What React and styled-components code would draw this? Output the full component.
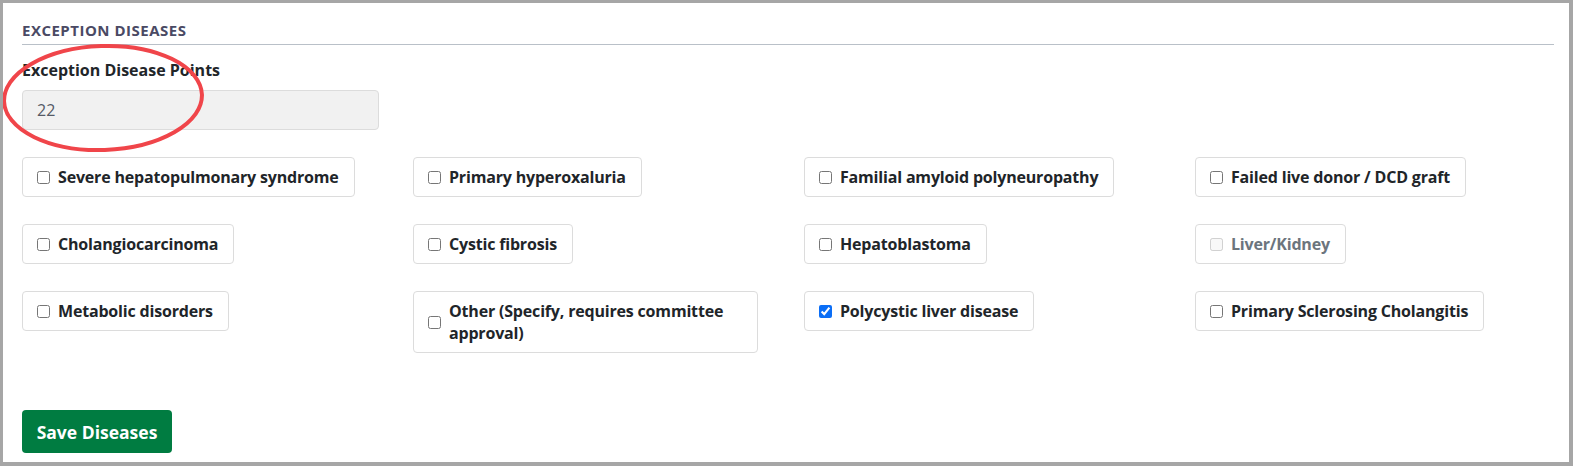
import React from 'react';
import styled, { createGlobalStyle } from 'styled-components';

const GlobalStyle = createGlobalStyle`
  html, body {
    margin: 0;
    padding: 0;
    background: #fff;
  }
  body {
    font-family: "Open Sans", "Noto Sans", "Liberation Sans", sans-serif;
    color: #212529;
  }
  * { box-sizing: border-box; }
`;

const diseases = [
  { label: 'Severe hepatopulmonary syndrome' },
  { label: 'Primary hyperoxaluria' },
  { label: 'Familial amyloid polyneuropathy' },
  { label: 'Failed live donor / DCD graft' },
  { label: 'Cholangiocarcinoma' },
  { label: 'Cystic fibrosis' },
  { label: 'Hepatoblastoma' },
  { label: 'Liver/Kidney', disabled: true },
  { label: 'Metabolic disorders' },
  { label: 'Other (Specify, requires committee approval)' },
  { label: 'Polycystic liver disease', checked: true },
  { label: 'Primary Sclerosing Cholangitis' },
];

function App() {
  return (
    <>
      <GlobalStyle />
      <Frame>
        <Section>
          <Heading>Exception Diseases</Heading>
          <Field>
            <Label htmlFor="points">Exception Disease Points</Label>
            <PointsInput id="points" value="22" disabled readOnly />
            {/* hand-drawn highlight around the points field */}
            <Circle width="220" height="170" aria-hidden="true">
              <ellipse
                cx="103"
                cy="98"
                rx="99"
                ry="52"
                transform="rotate(-2 103 98)"
                fill="none"
                stroke="#f0454a"
                strokeWidth="4"
              />
            </Circle>
          </Field>
          <Grid>
            {diseases.map((d) => (
              <Cell key={d.label}>
                <Card $disabled={d.disabled}>
                  <input
                    type="checkbox"
                    defaultChecked={d.checked}
                    disabled={d.disabled}
                  />
                  <span>{d.label}</span>
                </Card>
              </Cell>
            ))}
          </Grid>
          <SaveButton type="button">Save Diseases</SaveButton>
        </Section>
      </Frame>
    </>
  );
}

const Frame = styled.div`
  width: 1573px;
  height: 466px;
  border: 3px solid #a6a6a6;
  border-right-width: 4px;
  border-bottom-width: 4px;
  background: #fff;
  overflow: hidden;
`;

const Section = styled.div`
  padding: 17px 15px 0 19px;
`;

const Heading = styled.h2`
  margin: 0;
  padding-bottom: 4px;
  font-size: 15px;
  line-height: 20px;
  letter-spacing: 0.5px;
  font-weight: 700;
  text-transform: uppercase;
  color: #4a4a64;
  border-bottom: 1px solid #b9c0c8;
`;

const Field = styled.div`
  position: relative;
  margin-top: 15px;
`;

const Label = styled.label`
  display: block;
  font-size: 16px;
  font-weight: 700;
  line-height: 20px;
  margin-bottom: 10px;
`;

const PointsInput = styled.input`
  display: block;
  width: 357px;
  height: 40px;
  padding: 0 14px;
  font-family: inherit;
  font-size: 16px;
  color: #555a66;
  background: #f1f1f1;
  border: 1px solid #dcdcdc;
  border-radius: 4px;
  opacity: 1;
  -webkit-text-fill-color: #555a66;
`;

const Circle = styled.svg`
  position: absolute;
  left: -22px;
  top: -60px;
  pointer-events: none;
  overflow: visible;
`;

const Grid = styled.div`
  display: grid;
  grid-template-columns: repeat(4, 376px);
  column-gap: 15px;
  row-gap: 27px;
  margin-top: 27px;
  align-items: start;
`;

const Cell = styled.div`
  display: flex;
`;

const Card = styled.label`
  display: inline-flex;
  align-items: center;
  max-width: 345px;
  padding: 8px 15px 8px 14px;
  border: 1px solid #dcdcdc;
  border-radius: 4px;
  font-size: 16px;
  line-height: 22px;
  letter-spacing: -0.18px;
  font-weight: 700;
  color: ${(p) => (p.$disabled ? '#6c757d' : '#212529')};

  input {
    flex: none;
    width: 13px;
    height: 13px;
    margin: 0 8px 0 0;
    accent-color: #0b6ef6;
  }
`;

const SaveButton = styled.button`
  display: block;
  margin-top: 57px;
  width: 150px;
  height: 43px;
  padding: 0;
  border: none;
  border-radius: 4px;
  background: #007c41;
  color: #fff;
  font-family: inherit;
  font-size: 17.5px;
  font-weight: 700;
`;

export default App;
